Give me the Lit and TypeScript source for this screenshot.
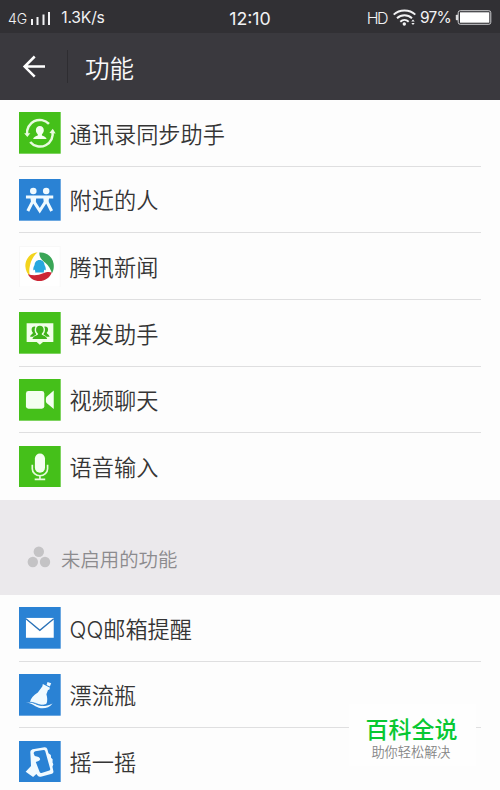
import { LitElement, html, css, svg } from "lit";
import { customElement, property } from "lit/decorators.js";

const glyphs: Record<string, unknown> = {
  sync: svg`
    <rect width="42" height="42" fill="#45c01a"/>
    <g fill="none" stroke="#e9fbe0" stroke-width="2.500">
      <path d="M8.200 22.500A12.800 12.800 0 0 1 30.200 12"/>
      <path d="M33.600 19A12.800 12.800 0 0 1 11.300 30.200"/>
    </g>
    <path d="M5.200 21.400h6.200l-3 3.800zM30.600 21.200l3.400-4.200 2.900 4.600z" fill="#e9fbe0"/>
    <path d="M21 14.100c2.500 0 4 1.800 4 4.200 0 1.700-.9 3.100-1.900 4v1.500c1.800.9 4.300 1.300 4.700 3.500H14.200c.4-2.200 2.900-2.600 4.700-3.500v-1.500c-1-.9-1.900-2.300-1.900-4 0-2.400 1.500-4.200 4-4.200z" fill="#f4fff0"/>`,
  nearby: svg`
    <rect width="42" height="42" fill="#2a82d4"/>
    <circle cx="14.400" cy="12" r="3.300" fill="#effaff"/><circle cx="27.400" cy="12" r="3.300" fill="#effaff"/>
    <path d="M7 16.600h27.500v3H7zM11.400 19h6l-.6 4.500h-4.600zM24.400 19h6l-.8 4.500H25z" fill="#effaff"/>
    <path d="M13.800 22.500L8.900 32.300M14.800 22.500L20.900 32 27 22.500M28 22.500L32.900 32.300" fill="none" stroke="#effaff" stroke-width="3.100"/>`,
  news: svg`
    <rect x=".5" y=".5" width="41" height="41" fill="#fff" stroke="#f8f8f8"/>
    <path d="M18.800 6.300C10.500 7 6.200 14 6.400 20.500c.2 4.300 2.200 7.700 4.500 10-.7-4.200-.8-7 .2-11.200 1.200-5 3.700-10 7.700-13z" fill="#f3d41d"/>
    <path d="M20.500 6.600c7.400-.8 13.400 4.600 14.400 11.400.5 3.700-.2 6.800-1.700 9.500-1.400-4-3.300-7.600-6.700-10.500-3.200-2.700-6.200-5.200-6-10.400z" fill="#3aa657"/>
    <path d="M9 28.500c5.500 1.700 10.600 1.200 15.400-1 3-1.400 5.700-1.900 8.600-.9-2.200 5.500-7 8.700-12.500 8.700-5.200 0-9.400-2.500-11.500-6.800z" fill="#cc2534"/>
    <path d="M20.700 14c3.100 0 4.900 2.200 5 5.200 1 1.500 1.500 3.400 1.200 5.200-.5.300-1-.2-1.400-.7l-.5 1.900.2 1h-9l.2-1-.5-1.900c-.4.500-.9 1-1.400.7-.3-1.800.2-3.700 1.200-5.200.1-3 1.900-5.200 5-5.200z" fill="#28a7df"/>`,
  group: svg`
    <rect width="42" height="42" fill="#45c01a"/>
    <path d="M7.700 11.400h26.900v18.800H24.200L21 33l-3.200-2.800H7.700z" fill="#f1ffe9"/>
    <path d="M21 13.900c2.400 0 3.800 1.700 3.800 3.900 0 1.700-.8 3-1.800 3.800v1.200c1.900 1 5 1.600 5.400 4.500H13.600c.4-2.900 3.500-3.500 5.400-4.500v-1.200c-1-.8-1.800-2.100-1.800-3.800 0-2.200 1.400-3.900 3.800-3.900z" fill="#3fb31a"/>
    <path d="M16.500 14.800c-2-.6-3.800.7-3.800 2.900 0 1.500.7 2.600 1.400 3.300-.5 1.600-2.500 1.600-2.900 3.900h3c1-.9 2-1.400 3-1.900v-1c-1.400-1.700-2-4.500-.7-7.200zM25.500 14.800c2-.6 3.800.7 3.800 2.900 0 1.500-.7 2.600-1.400 3.300.5 1.600 2.500 1.600 2.900 3.900h-3c-1-.9-2-1.400-3-1.900v-1c1.400-1.700 2-4.500.7-7.200z" fill="#3fb31a"/>`,
  video: svg`
    <rect width="42" height="42" fill="#45c01a"/>
    <rect x="7" y="12" width="18.500" height="18" rx="2.500" fill="#f4fff0"/>
    <path d="M35 11.500v18.800l-7.200-6.100c-1-.9-1-5.300 0-6.400z" fill="#f4fff0"/>`,
  mic: svg`
    <rect width="42" height="42" fill="#45c01a"/>
    <rect x="16" y="7.500" width="10.200" height="19.500" rx="5.100" fill="#f4fff0"/>
    <path d="M13.400 18.800v4a7.700 7.200 0 0 0 15.400 0v-4M21.100 30v3.200M15.800 33.600h10.600" fill="none" stroke="#e6fadd" stroke-width="1.700"/>`,
  mail: svg`
    <rect width="42" height="42" fill="#2a82d4"/>
    <rect x="7" y="11" width="28" height="20" fill="#fff"/>
    <path d="M7 11.800l14 11.700 14-11.700" fill="none" stroke="#2a72b8" stroke-width="1.300"/>`,
  bottle: svg`
    <rect width="42" height="42" fill="#2a82d4"/>
    <path d="M28.700 8l3.700 1.400-1.300 3.100-3.300-1.400z" fill="#f1faff"/>
    <path d="M24 10.200l7.200 3.700-.9 2.100-1-.2-1.700 4.500c1 3.200 1.200 6.600.2 9.500-1.500 1.500-3.700 1.900-5.900 1.500-3.600-.8-6.500-2.900-10.900-2.900.9-4.100 3.900-7.200 8-9.800l4.600-6.200z" fill="#f1faff"/>
    <path d="M6.800 28.800c5.500-.6 8.700.9 12.300 2.800 4.600 1.500 9.200.6 14.700-2-3 3.900-7.200 5.300-11.900 4.800-5.300-.7-8.200-5.100-15.100-5.600z" fill="#f1faff"/>
    <path d="M11.300 28.400c3.500.2 6 1.400 8.700 2.400 3.300 1 6 .4 8.200-.4" fill="none" stroke="#2a82d4" stroke-width=".7"/>`,
  shake: svg`
    <rect width="42" height="42" fill="#2a82d4"/>
    <path d="M15.300 8l10.400-1.700q2.200-.2 2.800 1.700l1.200 4.300 2.400 1.800.2 2.800 1.600 1.500-.1 3.300.8 1.800-.9 2.500 1 4.700q.2 1.800-1.500 2.400L22 36q-2 .4-3.100-1l-1.400-1.700-3.300 2.900-7.500-5.300 5.400-5.600-.7-14.300q.1-2.500 3.900-3z" fill="#f1faff"/>
    <path d="M16.400 10.300l8.300-1.300q1.300-.1 1.700 1l5 18q.3 1.300-.8 1.800l-7.900 2.500q-1.400.3-1.900-1l-3.900-10.200c1.700-.5 4.200-.9 4.400-2.700.1-1.900-2.500-2.700-5.400-3.200l-1.100-2.700q-.2-1.800 1.600-2.200z" fill="#2a82d4"/>`,
};

@customElement("feature-row")
export class FeatureRow extends LitElement {
  @property() icon = "";
  @property() label = "";

  static styles = css`
    :host {
      display: flex;
      align-items: center;
      box-sizing: border-box;
      margin: 0 19px 0 19.400px;
      height: 66.670px;
      border-bottom: 1px solid #dfdfe0;
    }
    :host(:last-of-type) { border-bottom-color: transparent; }
    .icon { display: block; flex: none; width: 41.700px; height: 41.700px; margin-top: 1px; }
    .label {
      margin-left: 8.500px;
      padding-top: 4px;
      font-size: 22.200px;
      line-height: 30px;
      color: #353535;
      white-space: nowrap;
    }
  `;

  render() {
    return html`
      <svg class="icon" viewBox="0 0 42 42">${glyphs[this.icon]}</svg>
      <span class="label">${this.label}</span>
    `;
  }
}

@customElement("app-root")
export class AppRoot extends LitElement {
  static styles = css`
    :host {
      display: flex;
      flex-direction: column;
      position: relative;
      height: 790px;
      overflow: hidden;
      background: #fdfdfd;
      font-family: Inter, "Noto Sans CJK SC", sans-serif;
      font-weight: 350;
    }
    .status {
      display: grid;
      grid-template-columns: 1fr auto 1fr;
      align-items: center;
      height: 33px;
      flex: none;
      box-sizing: border-box;
      padding: 2px 8px 0;
      background: #313034;
      color: #f2f2f4;
      font-size: 16px;
      font-weight: 400;
    }
    .left, .right { display: flex; align-items: center; }
    .right { justify-content: flex-end; }
    .net { font-size: 14px; font-weight: 300; padding-top: 2px; letter-spacing: 0; }
    .signal { width: 20px; height: 13px; margin: 1px 0 0 4px; }
    .speed { font-size: 15.700px; margin-left: 10px; letter-spacing: -.2px; }
    .clock { font-size: 17.800px; padding-top: 1px; letter-spacing: 0; }
    .hd { font-size: 16px; font-weight: 300; letter-spacing: -1.500px; }
    .wifi { width: 23px; height: 17px; margin: 0 4px 0 6px; }
    .percent { font-size: 15.500px; letter-spacing: -.8px; }
    .battery { width: 37px; height: 15px; margin-left: 4px; }
    .bar {
      display: flex;
      align-items: center;
      height: 67px;
      flex: none;
      background: #3a393e;
      color: #fafafa;
    }
    .back { width: 24px; height: 24px; margin-left: 22px; }
    .rule { width: 1px; height: 33px; margin-left: 21px; background: #2e2d31; }
    .title { margin-left: 17px; padding-top: 4px; font-size: 24.500px; line-height: 34px; }
    .list { flex: none; background: #fdfdfd; }
    .section {
      display: flex;
      align-items: center;
      height: 95px;
      flex: none;
      box-sizing: border-box;
      padding: 20px 0 0 27px;
      background: #ebe9ec;
      color: #8c8b8e;
      font-size: 19.400px;
    }
    .section span { padding-top: 2px; }
    .dots { width: 24px; height: 22px; margin-right: 10px; }
    .stamp {
      position: absolute;
      left: 349px;
      top: 704px;
      width: 127px;
      height: 62px;
      display: flex;
      flex-direction: column;
      align-items: center;
      box-sizing: border-box;
      padding-top: 12px;
      background: #fefefe;
    }
    .brand { font-size: 23px; line-height: 29px; font-weight: 500; color: #08c832; margin-right: 2px; }
    .motto { font-size: 13.200px; line-height: 14px; color: #858585; font-weight: 350; margin-right: 3px; }
  `;

  render() {
    const enabled = [
      ["sync", "通讯录同步助手"],
      ["nearby", "附近的人"],
      ["news", "腾讯新闻"],
      ["group", "群发助手"],
      ["video", "视频聊天"],
      ["mic", "语音输入"],
    ];
    const disabled = [
      ["mail", "QQ邮箱提醒"],
      ["bottle", "漂流瓶"],
      ["shake", "摇一摇"],
    ];
    const rows = (items: string[][]) =>
      items.map(([icon, label]) => html`<feature-row .icon=${icon} .label=${label}></feature-row>`);

    return html`
      <div class="status">
        <div class="left">
          <span class="net">4G</span>
          <svg class="signal" viewBox="0 0 20 13" fill="#f2f2f4">
            <rect x="0" y="7" width="2" height="6"/><rect x="5.500" y="5" width="2" height="8"/>
            <rect x="11.500" y="2.500" width="2" height="10.500"/><rect x="17" y="0" width="2" height="13"/>
          </svg>
          <span class="speed">1.3K/s</span>
        </div>
        <span class="clock">12:10</span>
        <div class="right">
          <span class="hd">HD</span>
          <svg class="wifi" viewBox="0 0 23 17">
            <g fill="none" stroke="#f2f2f4" stroke-width="1.900">
              <path d="M.7 5.600C6.500.1 16.500.1 22.300 5.600"/>
              <path d="M4 9.300c4.200-4 10.800-4 15 0"/>
              <path d="M7.300 12.700c2.400-2.300 6-2.300 8.400 0"/>
            </g>
            <circle cx="11.300" cy="15" r="1.700" fill="#f2f2f4"/>
            <path d="M18.300 12.600l1.700-2.100 1.700 2.100zM18.300 14l1.700 2.100 1.700-2.100z" fill="#f2f2f4"/>
          </svg>
          <span class="percent">97%</span>
          <svg class="battery" viewBox="0 0 37 15">
            <rect x="3.200" y=".7" width="32.600" height="13.600" rx="2" fill="none" stroke="#cfcfd2" stroke-width="1"/>
            <rect x="5" y="2.300" width="29.300" height="10.400" fill="#fff"/>
            <path d="M3 4.800H1.600q-.8 0-.8.800v3.800q0 .8.800.8H3z" fill="#dedee0"/>
          </svg>
        </div>
      </div>
      <div class="bar">
        <svg class="back" viewBox="0 0 24 24" fill="none" stroke="#fff" stroke-width="2.500">
          <path d="M23 11.600H3M12.700 1.500L2.600 11.600l10.100 10.100"/>
        </svg>
        <div class="rule"></div>
        <span class="title">功能</span>
      </div>
      <div class="list">${rows(enabled)}</div>
      <div class="section">
        <svg class="dots" viewBox="0 0 24 22" fill="#c4c3c5">
          <circle cx="11.800" cy="5.700" r="5.200"/><circle cx="5.800" cy="16" r="5.200"/><circle cx="18" cy="16" r="5.200"/>
        </svg>
        <span>未启用的功能</span>
      </div>
      <div class="list">${rows(disabled)}</div>
      <div class="stamp">
        <span class="brand">百科全说</span>
        <span class="motto">助你轻松解决</span>
      </div>
    `;
  }
}
